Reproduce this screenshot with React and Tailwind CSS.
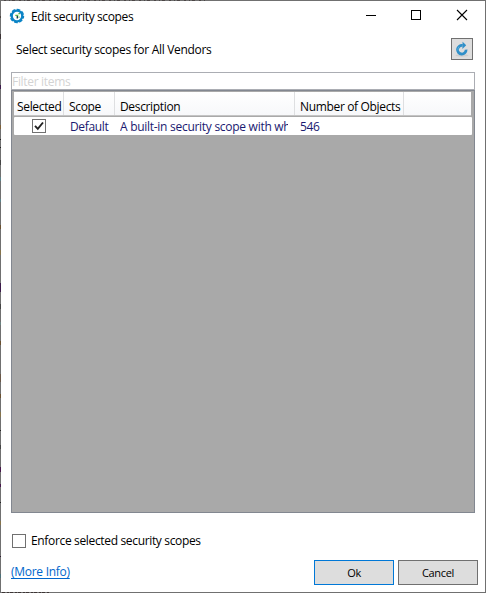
import React from "react";

function AppLogo() {
  return (
    <svg width="16" height="16" viewBox="0 0 16 16" className="shrink-0">
      <circle cx="8" cy="8" r="5.3" fill="none" stroke="#0b84c6" strokeWidth="2.3" />
      <circle cx="8" cy="8" r="6.5" fill="none" stroke="#0b84c6" strokeWidth="1.4" strokeDasharray="3.6 1.5" strokeDashoffset="1" />
      <path d="M6.3 7.4h3M9.4 5.6h1.6M10 8.5v1.2" stroke="#5ab947" strokeWidth="1.1" fill="none" />
      <path d="M7.6 8h1.4v2.4H7.6z" fill="#173f52" />
    </svg>
  );
}

function WindowButtons() {
  return (
    <div className="flex h-[30px] text-black">
      <svg width="46" height="30" viewBox="0 0 46 30" shapeRendering="crispEdges">
        <path d="M18 14.5h10" stroke="currentColor" />
      </svg>
      <svg width="45" height="30" viewBox="0 0 45 30" shapeRendering="crispEdges">
        <rect x="17.5" y="9.5" width="9" height="9" fill="none" stroke="currentColor" />
      </svg>
      <svg width="46" height="30" viewBox="0 0 46 30">
        <path d="M18 9l10 10M28 9L18 19" stroke="currentColor" strokeWidth="1.1" />
      </svg>
    </div>
  );
}

function RefreshButton() {
  return (
    <button className="flex h-[22px] w-[22px] items-center justify-center border border-[#707070] bg-[#dddddd]">
      <svg width="16" height="16" viewBox="0 0 16 16">
        <ellipse cx="8" cy="14.4" rx="6.5" ry="1.3" fill="#cdcdcd" />
        <path d="M8.6 4.5A4.3 4.3 0 1 0 12.1 8.6" fill="none" stroke="#2f8fc8" strokeWidth="2.8" />
        <path d="M8.6 0.8l3.6 3.4-3.8 3.9z" fill="#2f8fc8" />
        <path d="M5 5.7A4.3 4.3 0 0 0 4 9.5" fill="none" stroke="#5fb4e2" strokeWidth="0.9" />
      </svg>
    </button>
  );
}

const edgeMarks = [
  [16, 2, "#4b4440"], [34, 5, "#3a3133"], [85, 4, "#3b1a4a"], [125, 4, "#7d6038"],
  [139, 1, "#222222"], [147, 1, "#222222"], [160, 5, "#444444"], [177, 4, "#5c8289"],
  [199, 3, "#5c8289"], [225, 4, "#6a5030"], [250, 5, "#85734c"], [283, 9, "#3b1a4a"],
  [304, 5, "#444444"], [322, 3, "#6a8280"], [341, 4, "#6a5030"], [374, 8, "#6a5848"],
  [394, 4, "#6a5030"], [412, 5, "#85734c"], [430, 1, "#222222"], [445, 4, "#444444"],
  [467, 5, "#45164a"], [484, 3, "#45164a"], [502, 1, "#222222"], [521, 4, "#85734c"],
  [556, 1, "#2c1a30"], [574, 4, "#4d7078"],
];

function FrameEdge() {
  return (
    <svg className="pointer-events-none absolute -top-px -left-px" width="210" height="593" shapeRendering="crispEdges">
      {edgeMarks.map(([y, h, color]) => (
        <rect key={y} x="0" y={y} width="1" height={h} fill={color} />
      ))}
      <path d="M4 .5h202" stroke="#4c4646" strokeDasharray="2 3 1 2 3 4" />
      <path d="M2 592.5h48" stroke="#3d3535" strokeDasharray="3 2 2 1" />
    </svg>
  );
}

const headCell = "flex items-end border-r border-[#dedfe1]";

export default function App() {
  return (
    <div className="relative flex h-[593px] w-[486px] flex-col border border-[#707070] bg-white font-['Open_Sans','Noto_Sans',sans-serif] text-[12px] leading-4 tracking-[-0.34px] whitespace-nowrap text-black">
      <FrameEdge />
      <header className="flex h-[30px] shrink-0 items-center pl-2">
        <AppLogo />
        <h1 className="ml-[6px] grow pt-px tracking-[-0.38px]">Edit security scopes</h1>
        <WindowButtons />
      </header>

      <div className="flex h-[41px] shrink-0 items-start justify-between pt-[7px] pr-3 pl-[15px]">
        <p className="pt-1 tracking-[-0.31px]">Select security scopes for All Vendors</p>
        <RefreshButton />
      </div>

      <main className="mx-[10px] flex w-[464px] flex-col">
        <div className="h-[18px] border border-[#abadb3] pt-px tracking-[-0.31px] text-[#d3d3d3]">Filter items</div>
        <div className="h-[423px] border border-[#828790] bg-[#a9a9a9] pt-px pr-[2px] pl-[2px]">
          <div className="mr-px grid h-[24px] grid-cols-[50px_51px_180px_109px_1fr] border-b border-[#c4c4c4] bg-linear-to-b from-white to-[#f7f8fa]">
            <div className={headCell + " pl-[3px]"}>Selected</div>
            <div className={headCell + " pl-[5px]"}>Scope</div>
            <div className={headCell + " pl-[5px]"}>Description</div>
            <div className={headCell + " pl-[5px]"}>Number of Objects</div>
            <div />
          </div>
          <div className="mt-px grid h-[18px] grid-cols-[50px_51px_180px_1fr] items-center rounded-[1px] bg-white text-[#191970]">
            <div className="flex justify-center">
              <span className="flex h-[14px] w-[14px] items-center justify-center border border-[#707070]">
                <svg width="12" height="12" viewBox="0 0 12 12">
                  <path d="M2 5.8l2.8 3L10 2.5" fill="none" stroke="#212121" strokeWidth="1.9" />
                </svg>
              </span>
            </div>
            <div className="pt-px pl-[6px]">Default</div>
            <div className="mr-[7px] ml-[5px] overflow-hidden pt-px tracking-[-0.28px]">A built-in security scope with wh</div>
            <div className="pt-px pl-[5px]">546</div>
          </div>
        </div>
      </main>

      <footer className="flex grow flex-col pl-[10px]">
        <label className="mt-[20px] flex items-center">
          <span className="mr-[5px] ml-px h-[14px] w-[14px] border border-[#707070]" />
          Enforce selected security scopes
        </label>
        <div className="mt-[11px] flex items-start">
          <a className="mt-1 grow tracking-[-0.28px] text-[#0066cc] underline underline-offset-2">(More Info)</a>
          <button className="h-[25px] w-[80px] border border-[#0078d7] bg-[#dddddd] pt-px text-[11px]">Ok</button>
          <button className="mr-[7px] ml-1 h-[25px] w-[80px] border border-[#707070] bg-[#dddddd] pt-px text-[11px]">Cancel</button>
        </div>
      </footer>
    </div>
  );
}
